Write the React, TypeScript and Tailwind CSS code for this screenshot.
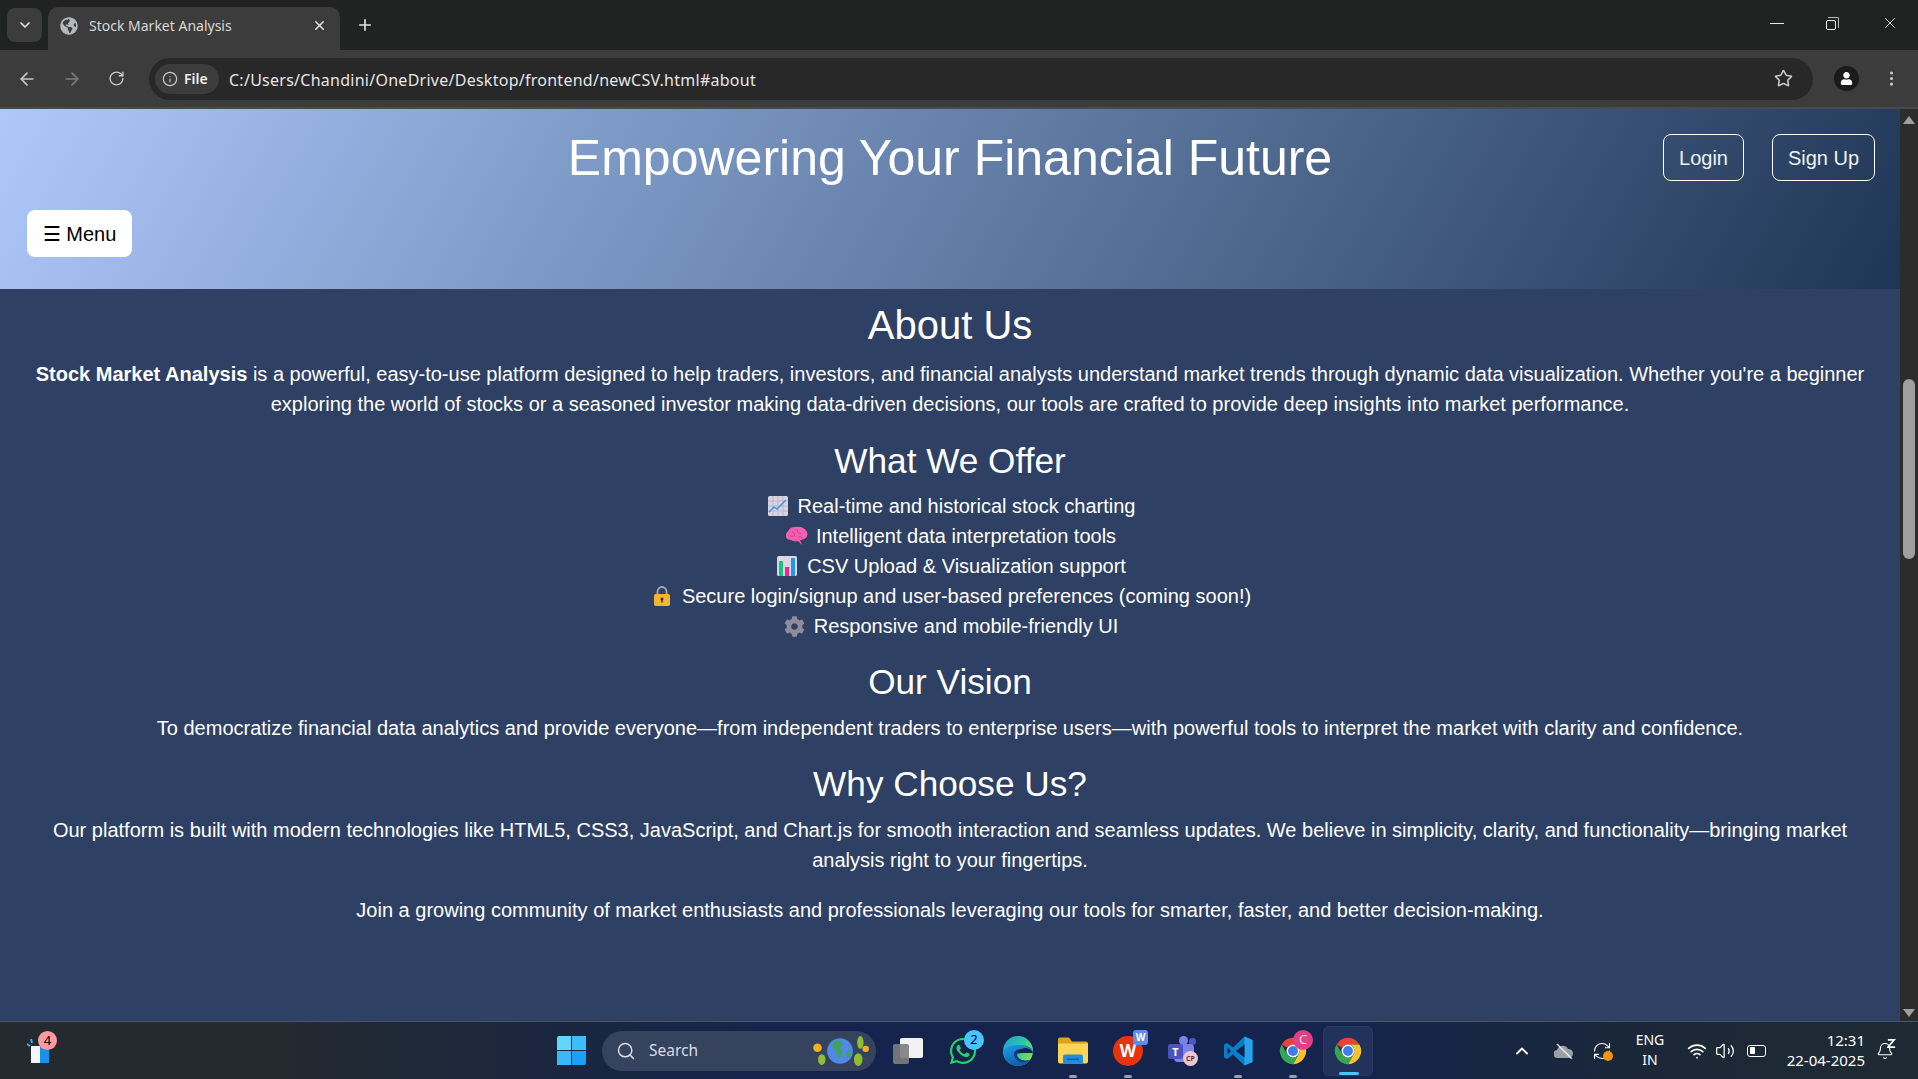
import { ReactNode } from 'react'
import {
  ArrowLeft,
  ArrowRight,
  Bell,
  ChevronDown,
  ChevronUp,
  Info,
  MoreVertical,
  Plus,
  RefreshCw,
  RotateCw,
  Search,
  Star,
  Volume2,
  Wifi,
  X,
} from 'lucide-react'
import { FaCog, FaGlobeAmericas, FaUser, FaWhatsapp } from 'react-icons/fa'

function ChromeIcon({ className }: { className?: string }) {
  return (
    <svg viewBox="0 0 24 24" className={className}>
      <path d="M12 1.5a10.5 10.5 0 0 1 9.1 5.25H12a5.25 5.25 0 0 0-4.55 2.63L2.9 6.75A10.5 10.5 0 0 1 12 1.5z" fill="#ea4335" />
      <path d="M21.1 6.75A10.5 10.5 0 0 1 12 22.5l4.55-7.88A5.25 5.25 0 0 0 12 6.75z" fill="#fbc02d" />
      <path d="M2.9 6.75l4.55 7.87a5.25 5.25 0 0 0 9.1 0L12 22.5A10.5 10.5 0 0 1 2.9 6.75z" fill="#34a853" />
      <circle cx="12" cy="12" r="5.2" fill="#fff" />
      <circle cx="12" cy="12" r="4" fill="#3f7ee8" />
    </svg>
  )
}

function EdgeIcon() {
  return (
    <svg viewBox="0 0 30 30" className="w-[30px] h-[30px]">
      <defs>
        <linearGradient id="edgeTop" x1="0" y1="0" x2="1" y2="0.6">
          <stop offset="0" stopColor="#1b9de2" />
          <stop offset="0.6" stopColor="#30c8a0" />
          <stop offset="1" stopColor="#7ee04f" />
        </linearGradient>
        <linearGradient id="edgeLow" x1="0" y1="0" x2="0.6" y2="1">
          <stop offset="0" stopColor="#1f9fe8" />
          <stop offset="1" stopColor="#0c59a4" />
        </linearGradient>
      </defs>
      <circle cx="15" cy="15" r="15" fill="url(#edgeTop)" />
      <path d="M0 15C0 24 7 30 15 30c5 0 9-2 12-6-3 1-5 1-8 0h-1c-3-1-5-3-5-6 0-3 4-6 9-6 4 0 7 2 8 5V16C29 11 24 9 17 9 8 9 3 11 0 15z" fill="url(#edgeLow)" />
      <path d="M11 18c0 4 3 7 7 8 3 0 6 0 9-2-3 1-5 1-8 0-3-1-5-3-5-6 0-2 2-4 4-5-4 0-7 2-7 5z" fill="#123a86" />
      <path d="M30 17h-8c-4 0-7 0-8 1 0-3 4-6 8-6 4 0 7 2 8 5z" fill="#14244c" />
    </svg>
  )
}

function FolderIcon() {
  return (
    <svg viewBox="0 0 30 26" className="w-[31px] h-[27px]">
      <path d="M0 2a2 2 0 0 1 2-2h9l3 4h14a2 2 0 0 1 2 2v4H0z" fill="#e0a418" />
      <path d="M0 6h30v18a2 2 0 0 1-2 2H2a2 2 0 0 1-2-2z" fill="#fcd558" />
      <path d="M5 26v-7a2 2 0 0 1 2-2h16a2 2 0 0 1 2 2v7z" fill="#1e8fe0" />
      <rect x="9" y="21" width="12" height="1.6" fill="#0b5fa8" />
    </svg>
  )
}

function VsCodeIcon() {
  return (
    <svg viewBox="0 0 30 30" className="w-[30px] h-[30px]">
      <path d="M21.5 0.5L10 11.5 4 7 1 8.5v13L4 23l6-4.500L21.500 29.500 29.500 26V4z" fill="#0a7cc8" />
      <path d="M21.500 0.500L29.500 4v22l-8 3.500z" fill="#25a3ea" />
      <path d="M21.500 8.500v13L13 15z" fill="#101f4c" />
      <path d="M4.500 11.500L8 15l-3.500 3.500z" fill="#101f4c" />
    </svg>
  )
}

function TaskIcon({ children, dot }: { children: ReactNode; dot?: boolean }) {
  return (
    <div className="relative w-[30px] h-[30px] shrink-0 flex items-center justify-center">
      {children}
      {dot && <span className="absolute -bottom-[12px] left-[11px] w-2 h-[3px] rounded-full bg-[#9aa0ab]" />}
    </div>
  )
}

function Badge({ children, className }: { children: ReactNode; className: string }) {
  return (
    <span className={`absolute flex items-center justify-center rounded-full text-[13px] leading-none ${className}`}>
      {children}
    </span>
  )
}

function ChartEmoji() {
  return (
    <svg viewBox="0 0 20 20" className="inline-block w-5 h-5 ml-[3px] mr-[10px] align-[-3px]">
      <rect width="20" height="20" rx="1.500" fill="#d9d3e2" />
      <path d="M0 5h20M0 10h20M0 15h20M5 0v20M10 0v20M15 0v20" stroke="#b4adc2" strokeWidth="0.700" />
      <path d="M1 16l5-5 3 2 9-9" stroke="#3f9ee8" strokeWidth="1.600" fill="none" />
    </svg>
  )
}

function BrainEmoji() {
  return (
    <svg viewBox="0 0 22 20" className="inline-block w-[22px] h-[21px] ml-[2px] mr-[8px] align-[-4px]">
      <path d="M2 5c1-3 4-5 8-4.500 5-1 9 1 11 5 1 3 0 6-3 7-2 1-3 1-4 1l2 5-4-4c-3 1-5 0-7-1-3 0-6-2-5-5 0-2 1-3 2-3.500z" fill="#f55fb0" />
      <path d="M6 5c2 1 3 3 2 5M11 3c0 3 2 4 4 4M13 10c2 0 3 1 3 2M4 9c1 1 2 1 3 1" stroke="#c2337f" strokeWidth="0.800" fill="none" />
    </svg>
  )
}

function BarsEmoji() {
  return (
    <svg viewBox="0 0 20 20" className="inline-block w-5 h-5 ml-[3px] mr-[10px] align-[-3px]">
      <rect width="20" height="20" rx="1.500" fill="#dcd6e4" />
      <rect x="2" y="5" width="4" height="15" fill="#16c47f" />
      <rect x="8" y="11" width="4" height="9" fill="#f0268e" />
      <rect x="14" y="2" width="4" height="18" fill="#1e9be6" />
    </svg>
  )
}

function LockEmoji() {
  return (
    <svg viewBox="0 0 16 20" className="inline-block w-4 h-5 ml-[5px] mr-[12px] align-[-3px]">
      <path d="M3.500 9V5.500a4.500 4.500 0 0 1 9 0V9" stroke="#a9a9b2" strokeWidth="1.800" fill="none" />
      <rect y="8" width="16" height="12" rx="1.800" fill="#f2b632" />
      <circle cx="8" cy="13" r="1.500" fill="#3a2c1a" />
      <rect x="7.300" y="13" width="1.400" height="3.500" fill="#3a2c1a" />
    </svg>
  )
}

const OFFERS = [
  { icon: <ChartEmoji />, text: 'Real-time and historical stock charting' },
  { icon: <BrainEmoji />, text: 'Intelligent data interpretation tools' },
  { icon: <BarsEmoji />, text: 'CSV Upload & Visualization support' },
  { icon: <LockEmoji />, text: 'Secure login/signup and user-based preferences (coming soon!)' },
  { icon: <FaCog className="inline-block w-[21px] h-[21px] ml-[2px] mr-[9px] align-[-4px] text-[#8f8d9c]" />, text: 'Responsive and mobile-friendly UI' },
]

function TabStrip() {
  return (
    <div className="h-[50px] shrink-0 bg-[#202322] flex items-end pl-[7px] text-[#e3e3e3]">
      <div className="w-[35px] h-[34px] mb-2 rounded-lg bg-[#3c3c3c] flex items-center justify-center">
        <ChevronDown size={16} strokeWidth={2.500} />
      </div>
      <div className="ml-[6px] w-[292px] h-[43px] rounded-t-[10px] bg-[#3c3c3c] flex items-center pl-3 pr-[13px] pb-[6px]">
        <FaGlobeAmericas className="w-[18px] h-[18px] text-[#b5b8bb]" />
        <span className="ml-[11px] flex-1 text-[14px] text-[#d8d8d8]">Stock Market Analysis</span>
        <X size={15} strokeWidth={2.500} />
      </div>
      <Plus size={18} strokeWidth={2.200} className="ml-[16px] mb-[16px]" />
      <div className="flex-1" />
      <div className="flex items-center h-[50px] pr-[19px] gap-[42px] pb-1 text-[#e8e8e8]">
        <div className="w-[14px] h-px bg-[#e8e8e8]" />
        <div className="relative w-[13px] h-[13px]">
          <div className="absolute right-0 top-0 w-[11px] h-[11px] border-t border-r border-[#bbb] rounded-tr-[2px]" />
          <div className="absolute left-0 bottom-0 w-[10px] h-[10px] border border-[#e8e8e8] rounded-[2px]" />
        </div>
        <X size={18} strokeWidth={1.200} />
      </div>
    </div>
  )
}

function Toolbar() {
  return (
    <div className="h-[59px] shrink-0 bg-[#3c3c3c] border-b-2 border-[#4a4a4a] flex items-center pl-[17px] text-[#c7c7c7]">
      <ArrowLeft size={20} strokeWidth={2} />
      <ArrowRight size={20} strokeWidth={2} className="ml-[25px] text-[#7d7d7d]" />
      <RotateCw size={17} strokeWidth={2} className="ml-[26px]" />
      <div className="ml-[24px] w-[1664px] h-[42px] rounded-full bg-[#282828] flex items-center pl-[6px] pr-[20px]">
        <div className="w-[64px] h-[30px] rounded-full bg-[#3c3c3c] flex items-center pl-[7px] gap-[6px]">
          <Info size={16} strokeWidth={1.800} />
          <span className="text-[14px] font-semibold text-[#f0f0f0]">File</span>
        </div>
        <span className="ml-[10px] pt-[2px] flex-1 text-[16px] text-[#e6e6e6] tracking-[0.26px]">
          C:/Users/Chandini/OneDrive/Desktop/frontend/newCSV.html#about
        </span>
        <Star size={19} strokeWidth={2} />
      </div>
      <div className="ml-[21px] w-[25px] h-[25px] rounded-full bg-[#1b1b1b] flex items-center justify-center">
        <FaUser className="w-[13px] h-[13px] text-white" />
      </div>
      <MoreVertical size={19} strokeWidth={2} className="ml-[23px]" />
    </div>
  )
}

function Page() {
  return (
    <main className="flex-1 min-w-0 bg-[#2e4063] text-white font-['Liberation_Sans',sans-serif] text-center text-[20px] leading-[30px]">
      <header className="h-[180px] bg-[linear-gradient(120deg,#aec8fb_0%,#7f9cc9_30%,#1f3555_100%)] relative">
        <div className="flex items-center pt-[25px] pr-[25px] pl-[27px]">
          <div className="w-[1637px]" />
          <div className="flex gap-[28px]">
            <button className="h-[47px] w-[81px] rounded-lg border border-white text-[#eef1f5]">Login</button>
            <button className="h-[47px] w-[103px] rounded-lg border border-white text-[#eef1f5]">Sign Up</button>
          </div>
        </div>
        <h1 className="absolute left-0 right-0 top-[20px] text-[50px] leading-[58px] font-normal">
          Empowering Your Financial Future
        </h1>
        <button className="ml-[27px] mt-[29px] h-[47px] w-[105px] rounded-lg bg-white text-black block">
          ☰ Menu
        </button>
      </header>

      <section className="px-[25px] pt-[13px]">
        <h2 className="text-[40px] leading-[46px]">About Us</h2>
        <p className="mt-[11px]">
          <strong>Stock Market Analysis</strong> is a powerful, easy-to-use platform designed to help traders, investors, and financial analysts understand market trends through dynamic data visualization. Whether you're a beginner exploring the world of stocks or a seasoned investor making data-driven decisions, our tools are crafted to provide deep insights into market performance.
        </p>

        <h2 className="mt-[19px] text-[35.2px] leading-[46px]">What We Offer</h2>
        <ul className="mt-[7px]">
          {OFFERS.map((offer) => (
            <li key={offer.text}>
              {offer.icon}
              {offer.text}
            </li>
          ))}
        </ul>

        <h2 className="mt-[18px] text-[35.2px] leading-[46px]">Our Vision</h2>
        <p className="mt-[8px]">
          To democratize financial data analytics and provide everyone—from independent traders to enterprise users—with powerful tools to interpret the market with clarity and confidence.
        </p>

        <h2 className="mt-[18px] text-[35.2px] leading-[46px]">Why Choose Us?</h2>
        <p className="mt-[8px]">
          Our platform is built with modern technologies like HTML5, CSS3, JavaScript, and Chart.js for smooth interaction and seamless updates. We believe in simplicity, clarity, and functionality—bringing market analysis right to your fingertips.
        </p>
        <p className="mt-[20px]">
          Join a growing community of market enthusiasts and professionals leveraging our tools for smarter, faster, and better decision-making.
        </p>
      </section>
    </main>
  )
}

function Scrollbar() {
  return (
    <div className="w-[18px] shrink-0 bg-[#2c2c2c] flex flex-col items-center">
      <div className="mt-[7px] w-0 h-0 border-x-[6px] border-x-transparent border-b-[8px] border-b-[#9f9f9f]" />
      <div className="mt-[255px] w-[12px] h-[180px] rounded-full bg-[#9f9f9f]" />
      <div className="flex-1" />
      <div className="mb-[4px] w-0 h-0 border-x-[6px] border-x-transparent border-t-[8px] border-t-[#9f9f9f]" />
    </div>
  )
}

function Taskbar() {
  return (
    <footer className="h-[58px] shrink-0 border-t border-[#4a5567] bg-[linear-gradient(90deg,#232a30_0%,#232a30_15%,#14244c_40%,#14244c_70%,#1c2836_88%,#1e2a33_100%)] flex items-center text-white font-['Noto_Sans',sans-serif]">
      <div className="relative ml-[27px] w-[24px] h-[26px] shrink-0">
        <svg viewBox="0 0 24 26" className="w-6 h-[26px]">
          <rect x="4" y="8" width="18" height="17" fill="#1a90e6" />
          <rect x="4" y="8" width="9" height="17" fill="#f4f6fa" />
          <path d="M0 6l3 2M4 1l1 4" stroke="#34b4ee" strokeWidth="2" />
        </svg>
        <Badge className="left-[11px] -top-[7px] w-[19px] h-[19px] bg-[#ff99a4] text-black">4</Badge>
      </div>

      <div className="ml-[506px] w-[29px] h-[29px] shrink-0 grid grid-cols-2 gap-[1px]">
        <div className="bg-[#62d6fb] rounded-tl-[2px]" />
        <div className="bg-[#3ebdf9]" />
        <div className="bg-[#3cb8fa]" />
        <div className="bg-[#1aa0f6] rounded-br-[2px]" />
      </div>

      <div className="ml-[16px] w-[274px] h-[40px] shrink-0 rounded-full bg-[#35435f] flex items-center pl-[14px] pr-[6px] text-[#d8dce4]">
        <Search size={20} strokeWidth={1.800} />
        <span className="ml-[13px] flex-1 text-[15.5px]">Search</span>
        <svg viewBox="0 0 56 28" className="w-[60px] h-[30px]">
          <circle cx="7" cy="11" r="4" fill="#f0b020" />
          <ellipse cx="11" cy="22" rx="3.500" ry="5" fill="#8fbf30" />
          <ellipse cx="47" cy="6" rx="3" ry="6" fill="#8fbf30" />
          <ellipse cx="45" cy="22" rx="4" ry="6" fill="#8fbf30" />
          <circle cx="28" cy="14" r="12" fill="#4f8ae8" />
          <path d="M22 5c4-2 8 0 9 3l-3 4c2 2 3 5 0 9-3-2-3-6-5-8-2-2-3-5-1-8zM33 15l4-2 1 5-3 3z" fill="#3fa35f" />
          <circle cx="52" cy="12" r="3" fill="#f0b020" />
        </svg>
      </div>

      <div className="ml-[17px] flex items-center gap-[25px] shrink-0">
        <TaskIcon>
          <div className="relative w-[30px] h-[26px]">
            <div className="absolute right-0 top-0 w-[23px] h-[20px] bg-[#f2f2f2] rounded-[2px]" />
            <div className="absolute left-0 bottom-0 w-[16px] h-[20px] bg-[#7d7d7d]/90 rounded-[2px]" />
          </div>
        </TaskIcon>
        <TaskIcon>
          <FaWhatsapp className="w-[30px] h-[30px] text-[#25d366]" />
          <Badge className="left-[16px] -top-[6px] w-5 h-5 bg-[#4cc2ff] text-black">2</Badge>
        </TaskIcon>
        <TaskIcon>
          <EdgeIcon />
        </TaskIcon>
        <TaskIcon dot>
          <FolderIcon />
        </TaskIcon>
        <TaskIcon dot>
          <div className="w-[30px] h-[30px] rounded-full bg-[#e8340c] flex items-center justify-center text-[17px] font-bold">W</div>
          <span className="absolute -right-[5px] -top-[6px] w-[15px] h-[15px] rounded-[3px] bg-[#5f8cf0] text-[10px] leading-[15px] text-center font-bold">W</span>
        </TaskIcon>
        <TaskIcon>
          <div className="absolute right-[2px] top-[2px] w-[7px] h-[7px] rounded-full bg-[#5059c9]" />
          <div className="absolute left-[11px] top-0 w-[9px] h-[9px] rounded-full bg-[#7b83eb]" />
          <div className="absolute left-[6px] top-[8px] w-[20px] h-[18px] rounded-[4px] bg-[#7b83eb]" />
          <div className="absolute left-0 top-[8px] w-[15px] h-[15px] rounded-[2px] bg-[#4b53bc] text-[11px] leading-[15px] text-center font-bold">T</div>
          <div className="absolute right-0 bottom-0 w-[15px] h-[15px] rounded-full bg-[#eac7d2] text-[#6b2b3c] text-[7px] leading-[15px] text-center font-bold">CP</div>
        </TaskIcon>
        <TaskIcon dot>
          <VsCodeIcon />
        </TaskIcon>
        <TaskIcon dot>
          <ChromeIcon className="w-[30px] h-[30px]" />
          <Badge className="left-[15px] -top-[6px] w-5 h-5 bg-[#e23f84] text-[#fbd5e4]">C</Badge>
        </TaskIcon>
        <div className="-ml-[10px] w-[50px] h-[50px] rounded-md border border-[#2a3b63] bg-[#22325a] relative flex items-center justify-center">
          <ChromeIcon className="w-[30px] h-[30px]" />
          <span className="absolute bottom-0 left-[15px] w-5 h-[3px] rounded-full bg-[#4cc2ff]" />
        </div>
      </div>

      <ChevronUp size={20} strokeWidth={2.200} className="ml-[139px] shrink-0" />

      <svg viewBox="0 0 20 16" className="ml-[22px] w-5 h-4 shrink-0">
        <path d="M4 15a4 4 0 0 1-1-8 6 6 0 0 1 11-1 4.500 4.500 0 0 1 1 9z" fill="#9aa0a6" />
        <path d="M3 1l15 15" stroke="#fff" strokeWidth="1.200" />
      </svg>

      <div className="relative ml-[18px] w-5 h-5 shrink-0">
        <RefreshCw size={20} strokeWidth={1.300} />
        <span className="absolute -right-[1px] bottom-0 w-[10px] h-[10px] rounded-full bg-[#f7920d]" />
      </div>

      <div className="ml-[22px] -mt-px w-[32px] text-center text-[14px] leading-[20px] shrink-0">
        <div>ENG</div>
        <div>IN</div>
      </div>

      <Wifi size={20} strokeWidth={2} className="ml-[21px] shrink-0" />
      <Volume2 size={20} strokeWidth={1.500} className="ml-[8px] shrink-0" />
      <div className="ml-[12px] w-[19px] h-[12px] shrink-0 rounded-[3px] border border-white flex items-center p-[1.500px]">
        <div className="w-[5px] h-full bg-white rounded-[1px]" />
      </div>

      <div className="ml-[16px] -mt-[2px] w-[83px] shrink-0 text-right text-[15px] leading-[20px]">
        <div>12:31</div>
        <div>22-04-2025</div>
      </div>
      <div className="relative ml-[11px] w-[18px] h-[18px] shrink-0">
        <Bell size={18} strokeWidth={1.500} />
        <svg viewBox="0 0 10 10" className="absolute -right-[2px] -top-[3px] w-[9px] h-[9px]">
          <path d="M1 1h7L1 9h8" stroke="#fff" strokeWidth="1.800" fill="none" />
        </svg>
      </div>
    </footer>
  )
}

export default function App() {
  return (
    <div className="w-full h-screen overflow-hidden flex flex-col font-['Noto_Sans',sans-serif]">
      <TabStrip />
      <Toolbar />
      <div className="flex-1 min-h-0 flex">
        <Page />
        <Scrollbar />
      </div>
      <Taskbar />
    </div>
  )
}
